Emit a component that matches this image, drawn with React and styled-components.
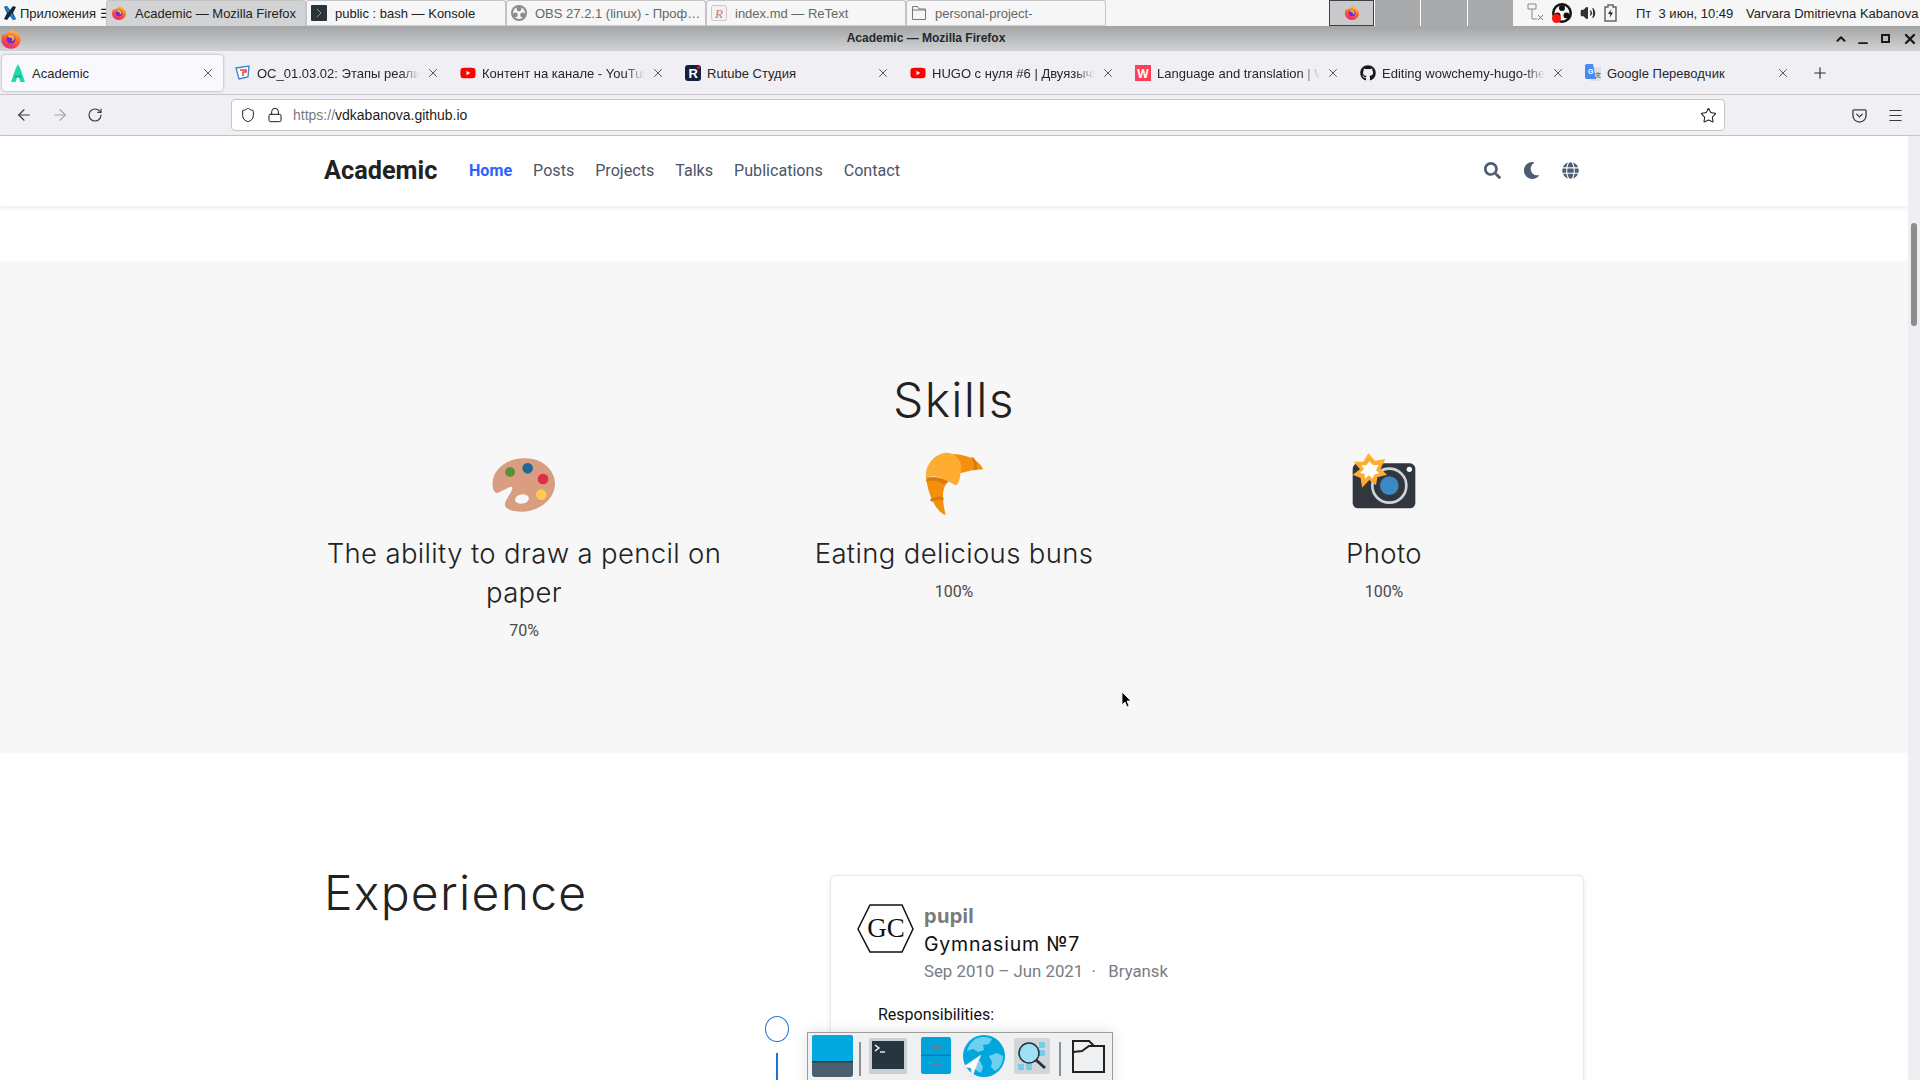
import React from 'react';
import styled, { createGlobalStyle } from 'styled-components';
import { ArrowLeft, ArrowRight, RotateCw, Shield, Lock, Star, Menu, X, Plus, ChevronUp, Minus, Volume2 } from 'lucide-react';
import { FaSearch, FaMoon, FaGlobe, FaGithub, FaYoutube } from 'react-icons/fa';

const GlobalStyle = createGlobalStyle`
  html, body { margin: 0; padding: 0; background: #fff; overflow: hidden; }
  * { box-sizing: border-box; }
  svg { flex: none; }
`;

const Screen = styled.div`
  position: relative;
  width: 1920px;
  height: 1080px;
  overflow: hidden;
  display: flex;
  flex-direction: column;
  font-family: "Liberation Sans", Arial, sans-serif;
`;

/* desktop panel */
const Panel = styled.div`
  height: 26px;
  flex: none;
  display: flex;
  background: #f6f6f6;
  font-size: 13px;
  color: #222;
`;

const AppsButton = styled.div`
  width: 106px;
  padding-left: 3px;
  display: flex;
  align-items: center;
  gap: 3px;
  white-space: nowrap;
  overflow: hidden;
`;

const WindowButton = styled.div`
  width: 200px;
  height: 26px;
  padding-left: 4px;
  display: flex;
  align-items: center;
  gap: 8px;
  border: 1px solid #c4c4c4;
  border-bottom: 1px solid #d0d0d0;
  border-radius: 3px 3px 0 0;
  background: ${p => (p.$active ? '#d2d3d5' : '#f6f6f6')};
  color: ${p => (p.$dim ? '#666' : '#222')};
  white-space: nowrap;
  overflow: hidden;
`;

const Pager = styled.div`
  width: 184px;
  margin-left: auto;
  display: flex;
`;

const PagerCell = styled.div`
  flex: ${p => (p.$active ? '0 0 45px' : 1)};
  display: flex;
  align-items: center;
  justify-content: center;
  background: ${p => (p.$active ? '#c8c9cb' : '#a9aaab')};
  border: ${p => (p.$active ? '1px solid #3d4145' : 'none')};
  border-left: ${p => (p.$active ? '1px solid #3d4145' : '1px solid #fff')};
`;

const Tray = styled.div`
  width: 407px;
  padding-left: 14px;
  display: flex;
  align-items: center;
  white-space: nowrap;
  overflow: hidden;
`;

const TrayIcons = styled.div`
  width: 109px;
  display: flex;
  align-items: center;
  gap: 8px;
`;

const Clock = styled.span`
  width: 110px;
  white-space: pre;
`;

/* window title */
const TitleBar = styled.div`
  height: 25px;
  flex: none;
  display: flex;
  align-items: center;
  background: linear-gradient(#a3a4a5, #d2d3d5);
`;

const TitleText = styled.div`
  flex: 1;
  padding-bottom: 2px;
  text-align: center;
  font-size: 12px;
  font-weight: 700;
  color: #23272b;
`;

const WindowControls = styled.div`
  width: 90px;
  padding: 0 2px 0 4px;
  display: flex;
  align-items: center;
  justify-content: space-between;
  color: #1a1a1a;
`;

const MaxBox = styled.span`
  width: 9px;
  height: 9px;
  border: 2.5px solid #1a1a1a;
  margin: 0 4px;
`;

/* tabs */
const TabBar = styled.div`
  height: 44px;
  flex: none;
  display: flex;
  align-items: center;
  background: #f0f0f4;
  border-bottom: 1px solid #c6c6c8;
`;

const Tab = styled.div`
  width: 221px;
  height: 36px;
  margin: 0 2px;
  padding: 0 8px;
  display: flex;
  align-items: center;
  gap: 6px;
  font-size: 13px;
  color: #26262b;
  border-radius: 4px;
  background: ${p => (p.$active ? '#f9f9fb' : 'transparent')};
  box-shadow: ${p => (p.$active ? '0 0 3px rgba(0,0,0,.35)' : 'none')};
`;

const TabTitle = styled.span`
  flex: 1;
  min-width: 0;
  padding-top: 1px;
  white-space: nowrap;
  overflow: hidden;
  ${p => p.$fade && 'mask-image: linear-gradient(to right, #000 88%, transparent);'}
`;

const NewTab = styled.div`
  width: 40px;
  display: flex;
  justify-content: center;
  color: #2b2b30;
`;

/* address bar */
const UrlRow = styled.div`
  height: 41px;
  flex: none;
  display: flex;
  align-items: center;
  background: #f0f0f4;
  border-bottom: 1px solid #c6c6c8;
  color: #3a3a40;
`;

const NavButtons = styled.div`
  width: 231px;
  padding-left: 15px;
  display: flex;
  align-items: center;
  gap: 18px;
`;

const UrlBox = styled.div`
  width: 1494px;
  height: 32px;
  padding: 0 7px 0 8px;
  display: flex;
  align-items: center;
  background: #fff;
  border: 1px solid #c4c4c6;
  border-radius: 4px;
  font-size: 14px;
  color: #1e1e22;
`;

const UrlIcons = styled.div`
  display: flex;
  align-items: center;
  gap: 11px;
  margin-right: 10px;
`;

const UrlText = styled.span`
  flex: 1;
  span { color: #7b7b80; }
`;

const RightButtons = styled.div`
  flex: 1;
  padding: 0 16px 0 127px;
  display: flex;
  align-items: center;
  justify-content: space-between;
`;

/* page */
const Viewport = styled.div`
  flex: 1;
  min-height: 0;
  display: flex;
`;

const Page = styled.div`
  width: 1908px;
  font-family: Roboto, sans-serif;
  background: #fff;
`;

const Scrollbar = styled.div`
  width: 12px;
  padding: 87px 3px 0;
  background: #eeeff2;
`;

const Thumb = styled.div`
  width: 6px;
  height: 103px;
  border-radius: 3px;
  background: #8c8c8c;
`;

const Navbar = styled.nav`
  height: 70px;
  padding: 0 324px 2px;
  display: flex;
  align-items: center;
  background: #fff;
  box-shadow: 0 2px 5px rgba(0, 0, 0, .08);
`;

const Brand = styled.div`
  width: 145px;
  font-size: 25.3px;
  font-weight: 700;
  color: #222;
`;

const NavLink = styled.a`
  margin-right: 21px;
  font-size: 16.1px;
  font-weight: ${p => (p.$active ? 700 : 400)};
  color: ${p => (p.$active ? '#2962ff' : '#4a5568')};
`;

const NavIcons = styled.div`
  margin-left: auto;
  margin-right: 5px;
  display: flex;
  align-items: center;
  gap: 22px;
  color: #4f5d73;
  font-size: 17px;
`;

const Skills = styled.section`
  margin-top: 55px;
  padding: 109px 0 110px 309px;
  background: #f7f7f7;
`;

const SkillsHeading = styled.h1`
  width: 1290px;
  height: 60px;
  margin: 0 0 10px;
  font-family: Inter, sans-serif;
  font-size: 48px;
  font-weight: 300;
  letter-spacing: 1.3px;
  line-height: 60px;
  text-align: center;
  color: #222;
`;

const SkillGrid = styled.div`
  width: 1290px;
  display: grid;
  grid-template-columns: repeat(3, 1fr);
`;

const Skill = styled.div`
  padding: 0 15px;
  display: flex;
  flex-direction: column;
  align-items: center;
  text-align: center;
`;

const SkillTitle = styled.h3`
  margin: 4px 0 0;
  font-family: Inter, sans-serif;
  font-size: 27.5px;
  font-weight: 300;
  letter-spacing: .35px;
  line-height: 39px;
  color: #222;
`;

const SkillValue = styled.div`
  margin-top: 7px;
  font-size: 16px;
  line-height: 24px;
  color: #4a4a4a;
`;

const Experience = styled.section`
  padding: 122px 0 0 324px;
  display: flex;
`;

const ExperienceHeading = styled.h1`
  width: 441px;
  margin: 0;
  font-family: Inter, sans-serif;
  font-size: 48px;
  font-weight: 300;
  letter-spacing: 1.3px;
  line-height: 36px;
  color: #222;
`;

const Marker = styled.div`
  width: 65px;
  padding: 141px 0 0 0;
`;

const Dot = styled.div`
  width: 24px;
  height: 26px;
  border: 1.5px solid #1976d2;
  border-radius: 50%;
`;

const Stem = styled.div`
  width: 2px;
  height: 60px;
  margin: 11px 0 0 11px;
  background: #1976d2;
`;

const Card = styled.article`
  width: 754px;
  height: 420px;
  padding: 28px 26px;
  background: #fff;
  border: 1px solid #e8e8e8;
  border-radius: 6px;
  box-shadow: 0 1px 4px rgba(0, 0, 0, .1);
`;

const CardHead = styled.div`
  display: flex;
  gap: 9px;
`;

const Role = styled.div`
  height: 26px;
  margin-top: -1px;
  font-family: Inter, sans-serif;
  font-size: 20px;
  font-weight: 700;
  letter-spacing: .3px;
  line-height: 26px;
  color: #7a7a7a;
`;

const Org = styled.div`
  margin-top: 2px;
  height: 26px;
  font-family: Inter, sans-serif;
  font-size: 19.5px;
  letter-spacing: .8px;
  line-height: 26px;
  color: #111;
`;

const Meta = styled.div`
  margin-top: 1px;
  font-size: 16.8px;
  line-height: 26px;
  white-space: pre;
  color: #777c85;
`;

const Duties = styled.p`
  margin: 19px 0 0 21px;
  font-size: 16px;
  line-height: 24px;
  color: #111;
`;

/* overlays */
const Dock = styled.div`
  position: absolute;
  left: 807px;
  top: 1032px;
  width: 306px;
  height: 60px;
  padding: 2px 0 0 4px;
  display: flex;
  align-items: flex-start;
  background: #eff0f2;
  border: 1px solid #9d9d9d;
  box-shadow: 0 0 12px rgba(0, 0, 0, .12);
`;

const DockSep = styled.div`
  width: 2px;
  height: 34px;
  margin: 7px ${p => p.$right || 8}px 0 ${p => p.$left || 6}px;
  background: #8e9295;
`;

const DockIcon = styled.svg`
  margin-top: ${p => p.$top || 0}px;
  margin-right: ${p => p.$gap || 0}px;
`;

const DropIcon = styled.span`
  display: flex;
  transform: translateY(4px);
`;

const Cursor = styled.svg`
  position: absolute;
  left: 1121px;
  top: 691px;
`;

function FirefoxIcon({ size = 16 }) {
  return (
    <svg width={size} height={size} viewBox="0 0 32 32">
      <defs>
        <linearGradient id="ffg" x1="0.7" y1="0" x2="0.3" y2="1">
          <stop offset="0" stopColor="#ffc83d" />
          <stop offset="0.45" stopColor="#ff6a2b" />
          <stop offset="1" stopColor="#e8207f" />
        </linearGradient>
      </defs>
      <path d="M16 2c2 1 7 3 9 5 3 3 5 6 5 10 0 7-6 13-14 13S2 24 2 17c0-4 1-7 3-9l1 3c1-3 4-4 6-5 1 0 3-2 4-4z" fill="url(#ffg)" />
      <circle cx="16" cy="16" r="6.5" fill="#6b2bd6" />
      <path d="M11 12c3-3 8-3 10 1 1 3-1 6-4 6 2-2 1-5-2-5-2 0-3-1-4-2z" fill="#ffb02e" />
    </svg>
  );
}

const AppsIcon = () => (
  <svg width="14" height="16" viewBox="0 0 14 16">
    <path d="M1 2l3-1 3 4 3-4 3 1-3 6 3 6-3 1-3-4-3 4-3-1 3-6z" fill="#13283f" />
    <path d="M1 2l3-1 3 4-2 3zM13 14l-3 1-3-4 2-3z" fill="#1d7fd0" />
  </svg>
);

const KonsoleIcon = () => (
  <svg width="16" height="16" viewBox="0 0 16 16">
    <rect width="16" height="16" rx="1" fill="#2a3338" />
    <path d="M6 4l4 4-4 4" fill="none" stroke="#8d979c" />
  </svg>
);

const ObsIcon = ({ color = '#8a8a8a', size = 16, dot }) => (
  <svg width={size} height={size} viewBox="0 0 20 20">
    <circle cx="10" cy="10" r="10" fill={color} />
    <circle cx="10" cy="10" r="7.5" fill="#f6f6f6" />
    <circle cx="10" cy="5" r="3" fill={color} />
    <circle cx="5.5" cy="12.5" r="3" fill={color} />
    <circle cx="14.5" cy="12.5" r="3" fill={color} />
    {dot && <circle cx="4.5" cy="15.5" r="4.5" fill="#f11" />}
  </svg>
);

const RetextIcon = () => (
  <svg width="16" height="16" viewBox="0 0 16 16">
    <rect x=".5" y=".5" width="15" height="15" rx="2" fill="#f2f2f2" stroke="#c9c9c9" />
    <text x="4" y="13" fontFamily="Liberation Serif, serif" fontStyle="italic" fontSize="13" fill="#c77">R</text>
  </svg>
);

const FolderSmall = () => (
  <svg width="16" height="16" viewBox="0 0 16 16">
    <path d="M1.5 1.5h5l1.5 2.5h6.500v10.500h-13z" fill="none" stroke="#777" />
    <path d="M1.500 5h13" stroke="#777" />
  </svg>
);

const AcademicTabIcon = () => (
  <svg width="16" height="18" viewBox="0 0 16 18">
    <path d="M8 0l2.500 5L15 18h-4.500L8 11l-2.500 7H1L5.500 5z" fill="#1fd8ad" />
    <path d="M5 11.500h6l1 2H4z" fill="#0fb08f" />
  </svg>
);

const CourseIcon = () => (
  <svg width="16" height="16" viewBox="0 0 16 16">
    <path d="M1 3l13-2-1 11-9 2z" fill="#fff" stroke="#3f7fd0" strokeWidth="1.300" />
    <path d="M5 5h6v2L8 7v4" fill="none" stroke="#e2403a" strokeWidth="1.500" />
  </svg>
);

const RutubeIcon = () => (
  <svg width="16" height="16" viewBox="0 0 16 16">
    <rect width="16" height="16" rx="3" fill="#14213d" />
    <text x="3.500" y="13" fontFamily="Liberation Sans, sans-serif" fontWeight="700" fontSize="13" fill="#fff">R</text>
    <circle cx="13.500" cy="2.500" r="1.500" fill="#ed143b" />
  </svg>
);

const WikiIcon = () => (
  <svg width="16" height="16" viewBox="0 0 16 16">
    <rect width="16" height="16" fill="#ff3f57" />
    <text x="8" y="12.500" textAnchor="middle" fontFamily="Liberation Sans, sans-serif" fontWeight="700" fontSize="12" fill="#fff">W</text>
  </svg>
);

const TranslateIcon = () => (
  <svg width="16" height="18" viewBox="0 0 16 18">
    <rect x="5" y="3" width="11" height="14" fill="#dfe1e5" />
    <path d="M0 1.500C0 .700.700 0 1.500 0H8l3 15H1.500C.700 15 0 14.300 0 13.500z" fill="#4a8af4" />
    <text x="3" y="10" fontFamily="Liberation Sans, sans-serif" fontWeight="700" fontSize="7" fill="#fff">G</text>
    <text x="10" y="13" fontFamily="Noto Sans CJK SC, sans-serif" fontWeight="700" fontSize="6" fill="#6e7580">文</text>
  </svg>
);

const PocketIcon = () => (
  <svg width="15" height="15" viewBox="0 0 16 16" fill="none" stroke="#3a3a40" strokeWidth="1.400">
    <path d="M2 2h12a1 1 0 0 1 1 1v5a7 7 0 0 1-14 0V3a1 1 0 0 1 1-1z" />
    <path d="M5 6.500l3 3 3-3" strokeLinecap="round" />
  </svg>
);

// the three emoji use the pixel coordinates of a 100x90 box, times three
const PaletteEmoji = () => (
  <svg width="100" height="90" viewBox="12 0 300 270">
    <path d="M160 55C215 52 255 90 255 130 255 180 205 215 155 215 125 215 100 205 105 190 108 175 128 155 127 142 125 135 105 150 85 158 70 163 67 140 68 125 72 85 110 57 160 55Z" fill="#d99e82" />
    <ellipse cx="156" cy="177" rx="21" ry="14" transform="rotate(-10 156 177)" fill="#f7f7f7" />
    <circle cx="120" cy="96" r="15" fill="#5c913b" />
    <circle cx="173" cy="85" r="16" fill="#226699" />
    <circle cx="219" cy="117" r="16" fill="#dd2e44" />
    <circle cx="214" cy="164" r="16" fill="#ffcc4d" />
  </svg>
);

const CroissantEmoji = () => (
  <svg width="100" height="90" viewBox="12 0 300 270">
    <path d="M155 42C190 42 235 55 250 88 225 88 200 95 180 100Z" fill="#f4900c" />
    <path d="M212 50C222 62 224 78 220 91L230 89C233 76 230 65 222 54Z" fill="#d67a0a" />
    <path d="M78 110C100 108 130 115 146 125 125 140 125 175 137 225 115 220 85 175 78 110Z" fill="#f4900c" />
    <path d="M90 178C102 170 118 168 130 172L131 181C118 178 104 180 94 186Z" fill="#d67a0a" />
    <path d="M78 120C95 108 125 112 146 125L130 133C115 122 95 118 80 126Z" fill="#d67a0a" />
    <path d="M78 110C75 70 110 38 140 38 165 38 185 60 183 85 182 105 178 130 170 135 160 135 145 122 130 116 110 108 90 106 78 110Z" fill="#ffac33" />
  </svg>
);

const CameraEmoji = () => (
  <svg width="100" height="90" viewBox="-18 0 300 270">
    <rect x="38" y="70" width="188" height="135" rx="16" fill="#31373d" />
    <circle cx="148" cy="137" r="51" fill="none" stroke="#ccd6dd" strokeWidth="8" />
    <circle cx="148" cy="137" r="28" fill="#3b88c3" />
    <circle cx="208" cy="88" r="8" fill="#fff" />
    <polygon points="85,40 105,62 136,57 122,86 141,104 112,112 108,136 88,120 66,143 62,114 38,104 60,88 41,65 70,65" fill="#ffac33" />
    <polygon points="88,64 100,76 116,74 108,90 118,100 102,104 98,116 86,106 75,116 74,102 60,98 72,88 64,76 79,76" fill="#fff" />
  </svg>
);

const GcLogo = () => (
  <svg width="58" height="50" viewBox="0 0 58 50">
    <polygon points="1,25 13,1 45,1 56,25 45,48 13,48" fill="none" stroke="#111" strokeWidth="1.500" />
    <text x="29" y="33" textAnchor="middle" fontFamily="Liberation Serif, serif" fontSize="27" fill="#111">GC</text>
  </svg>
);

const tabs = [
  { title: 'Academic', icon: <AcademicTabIcon />, active: true },
  { title: 'ОС_01.03.02: Этапы реализации', icon: <CourseIcon />, fade: true },
  { title: 'Контент на канале - YouTube Studio', icon: <FaYoutube size={16} color="#f00" />, fade: true },
  { title: 'Rutube Студия', icon: <RutubeIcon /> },
  { title: 'HUGO с нуля #6 | Двуязычный сайт', icon: <FaYoutube size={16} color="#f00" />, fade: true },
  { title: 'Language and translation | Wowchemy', icon: <WikiIcon />, fade: true },
  { title: 'Editing wowchemy-hugo-themes', icon: <FaGithub size={16} color="#18171c" />, fade: true },
  { title: 'Google Переводчик', icon: <TranslateIcon /> },
];

const links = ['Posts', 'Projects', 'Talks', 'Publications', 'Contact'];

export default function App() {
  return (
    <Screen>
      <GlobalStyle />
      <Panel>
        <AppsButton><AppsIcon />Приложения ☰</AppsButton>
        <WindowButton $active><FirefoxIcon />Academic — Mozilla Firefox</WindowButton>
        <WindowButton><KonsoleIcon />public : bash — Konsole</WindowButton>
        <WindowButton $dim><ObsIcon />OBS 27.2.1 (linux) - Проф…</WindowButton>
        <WindowButton $dim><RetextIcon />index.md — ReText</WindowButton>
        <WindowButton $dim><FolderSmall />personal-project-</WindowButton>
        <Pager>
          <PagerCell $active><FirefoxIcon /></PagerCell>
          <PagerCell />
          <PagerCell />
          <PagerCell />
        </Pager>
        <Tray>
          <TrayIcons>
            <svg width="17" height="20" viewBox="0 0 17 20" fill="none" stroke="#888">
              <path d="M1 1h8v5H1zM5 6v10h5" />
              <path d="M11 12l5 5m0-5l-5 5" stroke="#e0413a" />
            </svg>
            <ObsIcon color="#111" size={20} dot />
            <Volume2 size={16} color="#333" fill="#333" />
            <svg width="13" height="18" viewBox="0 0 13 18">
              <path d="M4 1h5v2h3v14H1V3h3z" fill="none" stroke="#666" strokeWidth="1.500" />
              <path d="M7.500 5L4 10h2.500L5.500 14 9 8.500H6.500z" fill="#222" />
            </svg>
          </TrayIcons>
          <Clock>Пт  3 июн, 10:49</Clock>
          <span>Varvara Dmitrievna Kabanova</span>
        </Tray>
      </Panel>

      <TitleBar>
        <FirefoxIcon size={22} />
        <TitleText>Academic — Mozilla Firefox</TitleText>
        <WindowControls>
          <ChevronUp size={14} strokeWidth={3.500} />
          <DropIcon><Minus size={14} strokeWidth={3} /></DropIcon>
          <MaxBox />
          <X size={16} strokeWidth={3.500} />
        </WindowControls>
      </TitleBar>

      <TabBar>
        {tabs.map(t => (
          <Tab key={t.title} $active={t.active}>
            {t.icon}
            <TabTitle $fade={t.fade}>{t.title}</TabTitle>
            <X size={14} strokeWidth={1.300} />
          </Tab>
        ))}
        <NewTab><Plus size={18} strokeWidth={1.500} /></NewTab>
      </TabBar>

      <UrlRow>
        <NavButtons>
          <ArrowLeft size={18} strokeWidth={1.500} />
          <ArrowRight size={18} strokeWidth={1.500} color="#a4a4a8" />
          <RotateCw size={16} strokeWidth={1.700} />
        </NavButtons>
        <UrlBox>
          <UrlIcons>
            <Shield size={16} strokeWidth={1.500} />
            <Lock size={16} strokeWidth={1.500} />
          </UrlIcons>
          <UrlText><span>https://</span>vdkabanova.github.io</UrlText>
          <Star size={17} strokeWidth={1.500} />
        </UrlBox>
        <RightButtons>
          <PocketIcon />
          <Menu size={17} strokeWidth={1.500} />
        </RightButtons>
      </UrlRow>

      <Viewport>
        <Page>
          <Navbar>
            <Brand>Academic</Brand>
            <NavLink $active>Home</NavLink>
            {links.map(l => <NavLink key={l}>{l}</NavLink>)}
            <NavIcons><FaSearch /><FaMoon /><FaGlobe /></NavIcons>
          </Navbar>

          <Skills>
            <SkillsHeading>Skills</SkillsHeading>
            <SkillGrid>
              <Skill>
                <PaletteEmoji />
                <SkillTitle>The ability to draw a pencil on paper</SkillTitle>
                <SkillValue>70%</SkillValue>
              </Skill>
              <Skill>
                <CroissantEmoji />
                <SkillTitle>Eating delicious buns</SkillTitle>
                <SkillValue>100%</SkillValue>
              </Skill>
              <Skill>
                <CameraEmoji />
                <SkillTitle>Photo</SkillTitle>
                <SkillValue>100%</SkillValue>
              </Skill>
            </SkillGrid>
          </Skills>

          <Experience>
            <ExperienceHeading>Experience</ExperienceHeading>
            <Marker>
              <Dot />
              <Stem />
            </Marker>
            <Card>
              <CardHead>
                <GcLogo />
                <div>
                  <Role>pupil</Role>
                  <Org>Gymnasium №7</Org>
                  <Meta>Sep 2010 – Jun 2021  ·   Bryansk</Meta>
                </div>
              </CardHead>
              <Duties>Responsibilities:</Duties>
            </Card>
          </Experience>
        </Page>
        <Scrollbar><Thumb /></Scrollbar>
      </Viewport>

      <Dock>
        <DockIcon width="41" height="42" viewBox="0 0 41 42">
          <rect width="41" height="42" rx="3" fill="#4a5f6c" />
          <path d="M0 3a3 3 0 0 1 3-3h35a3 3 0 0 1 3 3v23H0z" fill="#00a8df" />
          <rect y="26" width="41" height="1.500" fill="#2b3a44" />
        </DockIcon>
        <DockSep />
        <DockIcon width="38" height="36" viewBox="0 0 38 36" $gap={14} $top={3}>
          <rect width="38" height="36" rx="2" fill="#c9cfd3" />
          <rect x="3" y="3" width="32" height="28" fill="#263640" />
          <path d="M6 7l4 3-4 3" fill="none" stroke="#fff" strokeWidth="1.300" />
          <path d="M11 14h5" stroke="#fff" strokeWidth="1.300" />
        </DockIcon>
        <DockIcon width="30" height="37" viewBox="0 0 30 37" $gap={12} $top={2}>
          <rect width="30" height="37" rx="2" fill="#00a3da" />
          <rect y="17.500" width="30" height="1.500" fill="#0a7ea8" />
          <rect x="10" y="9" width="10" height="2.500" fill="#62808f" />
          <rect x="10" y="26" width="10" height="2.500" fill="#62808f" />
        </DockIcon>
        <DockIcon width="42" height="42" viewBox="0 0 42 42" $gap={9}>
          <circle cx="21" cy="21" r="21" fill="#00a6dc" />
          <path d="M12 4c6-3 13-2 17 0l-3 5-6 1 1 5-6 2-5-3-6 2c1-5 4-9 8-12zM26 21l8-3 6 3c0 7-3 12-8 15l-4-4 1-5zM10 24l7 2 3 6-2 6c-6-2-9-8-8-14z" fill="#6dd0ef" />
          <path d="M18 20L0 32l8 1 1 9z" fill="#fff" stroke="#d5dbde" strokeWidth=".6" />
        </DockIcon>
        <DockIcon width="36" height="36" viewBox="0 0 36 36" $top={3}>
          <rect width="36" height="36" rx="2" fill="#d0d6d9" />
          <path d="M25 4h6v6h-6zM25 12h6v6h-6zM4 26h6v6H4zM12 26h6v6h-6z" fill="#76cdea" />
          <circle cx="15" cy="15" r="10" fill="#9fe0f4" stroke="#26333a" strokeWidth="1.500" />
          <path d="M22 22l9 8" stroke="#26333a" strokeWidth="3" />
        </DockIcon>
        <DockSep $left={9} $right={11} />
        <DockIcon width="33" height="33" viewBox="0 0 33 33" $top={5}>
          <path d="M1 1h16l5 5h10v26H1z" fill="none" stroke="#222" strokeWidth="2" />
          <path d="M1 12l9-1 7-5h15" fill="none" stroke="#222" strokeWidth="2" />
        </DockIcon>
      </Dock>

      <Cursor width="12" height="18" viewBox="0 0 12 18">
        <path d="M1 1v13l3-3 2 5 2-1-2-5h4z" fill="#000" stroke="#fff" strokeWidth=".8" />
      </Cursor>
    </Screen>
  );
}
